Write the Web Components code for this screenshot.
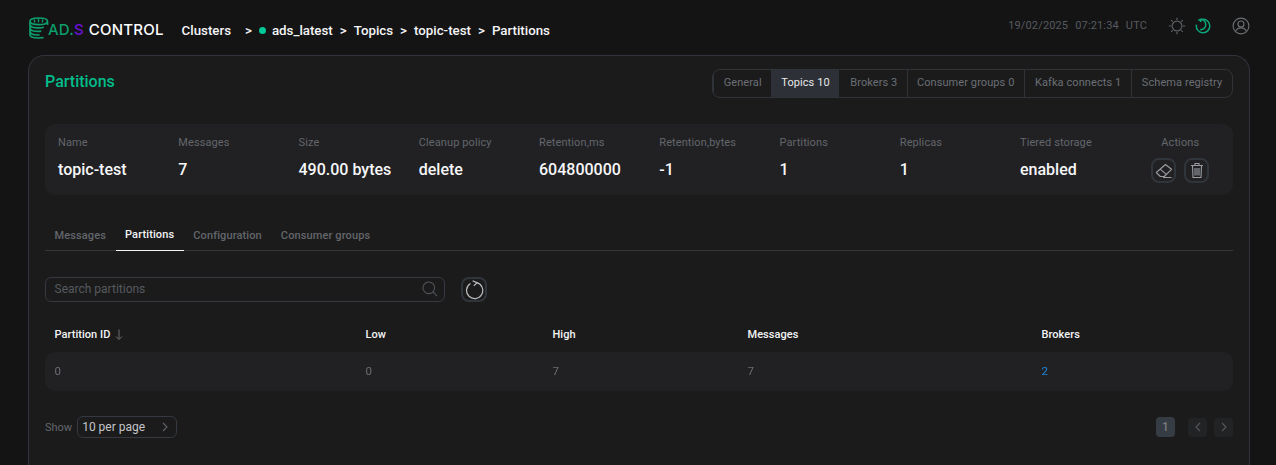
<!DOCTYPE html>
<html lang="en"><head><meta charset="utf-8"><title>Partitions</title>
<style>
html,body{margin:0;height:465px;overflow:hidden;background:#141415;font-family:Roboto,"Liberation Sans",sans-serif}
</style></head><body>
<ads-app></ads-app>
<script>
const def=(name,css,html)=>customElements.define(name,class extends HTMLElement{constructor(){super();this.attachShadow({mode:'open'}).innerHTML=`<style>${css}</style>${typeof html==='function'?html(this):html}`}});
const I={
sun:`<svg width="18" height="18" viewBox="0 0 18 18" fill="none" stroke="#5b5f63" stroke-width="1.2"><circle cx="9" cy="9" r="4.9"/><path d="M9 .8v2.2M9 15v2.2M.8 9H3M15 9h2.2M3.2 3.2l1.5 1.5M13.3 13.3l1.5 1.5M3.2 14.8l1.5-1.5M13.3 4.7l1.5-1.5"/></svg>`,
moon:`<svg width="16" height="16" viewBox="0 0 16 16" fill="none" stroke="#0aa679" stroke-width="1.5"><path d="M6.2 1.6A6.7 6.7 0 1 1 1.5 6.6"/><path d="M5.5 1.6a5 5 0 0 1 5.3 5.2 5 5 0 0 1-5.6 4.8"/><path d="M3.2 2.2l2.8-.8-.6 2.8"/></svg>`,
user:`<svg width="18" height="18" viewBox="0 0 18 18" fill="none" stroke="#6d7074" stroke-width="1.1"><circle cx="9" cy="9" r="7.9"/><circle cx="9" cy="7" r="3"/><path d="M3.6 14.4c1-2.5 3-3.5 5.4-3.5s4.400 1 5.400 3.500"/></svg>`,
eraser:`<svg width="18" height="18" viewBox="0 0 18 18" fill="none" stroke="#9a9ca0" stroke-width="1.1" stroke-linejoin="round"><path d="M1.300 10.500 10.500 2.500l6 4.800-7.200 7.200H5.300z"/><path d="M5.200 7.200 11.300 12.300M8 15.500h8.500"/></svg>`,
trash:`<svg width="14" height="17" viewBox="0 0 14 17" fill="none" stroke="#9a9ca0" stroke-width="1.1"><path d="M1 3.500h12M5 3.300V1.500h4v1.800M2.500 3.500l.5 12h8l.5-12M5 6v7.500M7 6v7.500M9 6v7.500"/></svg>`,
search:`<svg width="16" height="16" viewBox="0 0 16 16" fill="none" stroke="#4f5357" stroke-width="1.100"><circle cx="6.800" cy="6.800" r="5.800"/><path d="M11 11l4.200 4.200"/></svg>`,
refresh:`<svg width="20" height="20" viewBox="0 0 18 18" fill="none" stroke="#b9bbbe" stroke-width="1.100"><path d="M5.800 3.200A7.300 7.300 0 1 0 11.500 2.400"/><path d="M7.800.8 11.800 2.400 8.800 5.300"/></svg>`,
logo:`<svg width="21" height="22" viewBox="0 0 21 22" fill="none" stroke="#0c9f6c" stroke-width="1.700"><path d="M1 4.200C1 2 5 1 9.500 1S18.500 2 18.500 4.200 15 7.600 9.500 7.600 1 6.400 1 4.200Z"/><path d="M5.500 2.500v3M9.500 1.800v3.500M13.500 2.500v3" stroke-width="1.300"/><path d="M1 7.500c0 2.200 4 3.400 8.500 3.400 2 0 3.800-.2 5.300-.7M1 11c0 2.200 4 3.400 8.500 3.400 1 0 2-.1 2.800-.2M1 14.600c0 2.200 4 3.400 8.500 3.400l1-.1M1 17.800c0 2 4 3.200 8.500 3.200l5-.4M1 4.500V18M18.500 4.500v3.600"/></svg>`
};
def('ads-logo',`:host{display:flex;align-items:center;font:500 15px Inter,"Liberation Sans",sans-serif;letter-spacing:.2px;color:#fff}svg{display:block;margin-right:-2px}.a{color:#0c9f6c;margin-top:2px}.s{color:#6a10d8;margin-top:2px}.c{margin:2px 0 0 5px}`,
`${I.logo}<span class="a">AD.</span><span class="s">S</span><span class="c">CONTROL</span>`);
def('ads-crumbs',`:host{display:flex;align-items:center;font:500 13.300px Roboto,sans-serif;color:#f4f5f6}.sep{margin:0 7px}.dot{width:7px;height:7px;border-radius:50%;background:#00c896;margin-right:6px}.first{margin-right:14px}`,
`<span class="first">Clusters</span><span class="sep" style="margin-left:0;margin-right:7px">&gt;</span><span class="dot"></span><span>ads_latest</span><span class="sep">&gt;</span><span>Topics</span><span class="sep">&gt;</span><span>topic-test</span><span class="sep">&gt;</span><span>Partitions</span>`);
def('ads-header',`:host{display:flex;align-items:center;height:55px;padding:0 26px 0 29px;box-sizing:border-box}
ads-crumbs{margin-left:18px;margin-top:5px}ads-logo{margin-top:1px}
.r{margin-left:auto;display:flex;align-items:center;color:#565a60;font:400 11px Roboto,sans-serif;align-self:flex-start;margin-top:16px;height:20px}
.t{display:flex;gap:7px;letter-spacing:.15px;margin-top:-2px}svg{display:block}
.sun{margin-left:21px}.moon{margin-left:9px}.user{margin-left:21px}`,
`<ads-logo></ads-logo><ads-crumbs></ads-crumbs><div class="r"><div class="t"><span>19/02/2025</span><span>07:21:34</span><span>UTC</span></div><span class="sun">${I.sun}</span><span class="moon">${I.moon}</span><span class="user">${I.user}</span></div>`);
def('ads-segments',`:host{display:flex;height:29px;box-sizing:border-box;border:1px solid #303438;border-radius:8px;font:400 11px Roboto,sans-serif;color:#6b6f75;overflow:hidden;letter-spacing:.08px}
span{display:flex;align-items:center;padding:0 9.800px 2px;border-left:1px solid #303438}span:first-child{border:0;padding-left:10.800px}.on{background:#2d3036;color:#e8e9ea;border:0}.on+span{border:0;padding-left:10.800px}.on+span+span{padding-left:8.800px}`,
`<span>General</span><span class="on">Topics 10</span><span>Brokers 3</span><span>Consumer groups 0</span><span>Kafka connects 1</span><span>Schema registry</span>`);
def('ads-stat',`:host{display:flex;flex-direction:column;width:120.250px;flex:none}.l{font:400 11px/14px Roboto,sans-serif;color:#63666b;letter-spacing:.1px}.v{font:500 16px/20px Roboto,sans-serif;color:#f6f6f7;margin-top:10px}`,
t=>`<span class="l">${t.getAttribute('label')}</span><span class="v">${t.getAttribute('value')}</span>`);
def('ads-icon-btn',`:host{display:flex;align-items:center;justify-content:center;box-sizing:border-box;width:var(--w,25px);height:25px;border:2px solid #30353b;border-radius:8px}svg{display:block;flex:none}`,
t=>I[t.getAttribute('icon')]);
def('ads-summary',`:host{display:flex;height:71px;box-sizing:border-box;padding:12px 0 0 13px;background:#212124;border-radius:10px}
.a{display:flex;flex-direction:column;align-items:center;width:58px;margin-left:11px}.a span{font:400 11px/14px Roboto,sans-serif;color:#63666b;letter-spacing:.1px}.b{display:flex;gap:8px;margin-top:8px}`,
`<ads-stat label="Name" value="topic-test"></ads-stat><ads-stat label="Messages" value="7"></ads-stat><ads-stat label="Size" value="490.00 bytes"></ads-stat><ads-stat label="Cleanup policy" value="delete"></ads-stat><ads-stat label="Retention,ms" value="604800000"></ads-stat><ads-stat label="Retention,bytes" value="-1"></ads-stat><ads-stat label="Partitions" value="1"></ads-stat><ads-stat label="Replicas" value="1"></ads-stat><ads-stat label="Tiered storage" value="enabled"></ads-stat><div class="a"><span>Actions</span><div class="b"><ads-icon-btn icon="eraser"></ads-icon-btn><ads-icon-btn icon="trash"></ads-icon-btn></div></div>`);
def('ads-tabs',`:host{display:flex;height:31px;border-bottom:1px solid #33383d;font:500 11px Roboto,sans-serif;color:#63666b;box-sizing:content-box;letter-spacing:.12px}
span{display:flex;align-items:center;padding:0 9.500px;margin-bottom:-1px}.on{color:#f4f5f6;border-bottom:1px solid #f4f5f6}`,
`<span>Messages</span><span class="on">Partitions</span><span>Configuration</span><span>Consumer groups</span>`);
def('ads-search',`:host{display:flex;align-items:center;gap:16px}.i{display:flex;align-items:center;justify-content:space-between;width:400px;height:25px;box-sizing:border-box;border:1px solid #343a40;border-radius:6px;padding:0 6px 1px 8.500px;font:400 12px Roboto,sans-serif;color:#55595e}`,
`<div class="i"><span>Search partitions</span>${I.search}</div><ads-icon-btn icon="refresh" style="--w:26px"></ads-icon-btn>`);
def('ads-table',`:host{display:block;font:500 11px Roboto,sans-serif;letter-spacing:.05px}
.g{display:grid;grid-template-columns:311px 187px 195px 294px 1fr;padding-left:9.500px;align-items:center}
.h{color:#f3f4f5;height:36px}.r{height:39px;box-sizing:border-box;padding-bottom:2px;background:#212124;border-radius:10px;color:#6a6d71;font:400 11.500px Roboto,sans-serif;will-change:transform}
.b{color:#1f86d8}
svg{display:inline-block;vertical-align:-2px;margin-left:2px}`,
`<div class="g h"><span>Partition ID <svg width="8" height="11" viewBox="0 0 8 11" fill="none" stroke="#6a6d71" stroke-width="1"><path d="M4 .5v9.500M1 7.500 4 10.500 7 7.500"/></svg></span><span>Low</span><span>High</span><span>Messages</span><span>Brokers</span></div>
<div class="g r"><span>0</span><span>0</span><span>7</span><span>7</span><span class="b">2</span></div>`);
const ch=d=>`<svg width="6" height="10" viewBox="0 0 6 10" fill="none" stroke="currentColor" stroke-width="1.100"><path d="${d}"/></svg>`;
def('ads-footer',`:host{display:flex;align-items:center;height:24px}
.s{font:400 11px Roboto,sans-serif;color:#63666b;margin-right:5px}
.sel{display:flex;align-items:center;justify-content:space-between;width:100px;height:22px;box-sizing:border-box;border:1px solid #343a40;border-radius:6px;padding:0 8px 0 4px;font:400 12px Roboto,sans-serif;color:#c4c6c9}.sel svg{color:#5f6266}
.p{margin-left:auto;display:flex;align-items:center;gap:7px}
.b{display:flex;align-items:center;justify-content:center;width:19px;height:19px;border-radius:4px;background:#222325;color:#54575b}
.n{height:20px;background:#363c43;color:#777b80;font:500 12px Roboto,sans-serif;margin-right:6px}svg{display:block}`,
`<span class="s">Show</span><div class="sel"><span>10 per page</span>${ch('M1 1l4 4-4 4')}</div><div class="p"><span class="b n">1</span><span class="b">${ch('M5 1 1 5l4 4')}</span><span class="b">${ch('M1 1l4 4-4 4')}</span></div>`);
def('ads-panel',`:host{display:flex;flex-direction:column;margin:0 26px 0 28px;height:430px;box-sizing:border-box;padding:13px 16px 0;background:#1b1b1c;border:1px solid #30343a;border-bottom:0;border-radius:16px 16px 0 0}
.top{display:flex;justify-content:space-between;align-items:flex-start;height:55px}
h1{margin:4px 0 0;font:500 16px/18px Roboto,sans-serif;color:#00bd8a}
ads-tabs{margin-top:24px}ads-search{margin-top:26px}ads-table{margin-top:14px}ads-footer{margin-top:24px}`,
`<div class="top"><h1>Partitions</h1><ads-segments></ads-segments></div><ads-summary></ads-summary><ads-tabs></ads-tabs><ads-search></ads-search><ads-table></ads-table><ads-footer></ads-footer>`);
def('ads-app',`:host{display:block;color:#fff}`,`<ads-header></ads-header><ads-panel></ads-panel>`);
</script></body></html>
